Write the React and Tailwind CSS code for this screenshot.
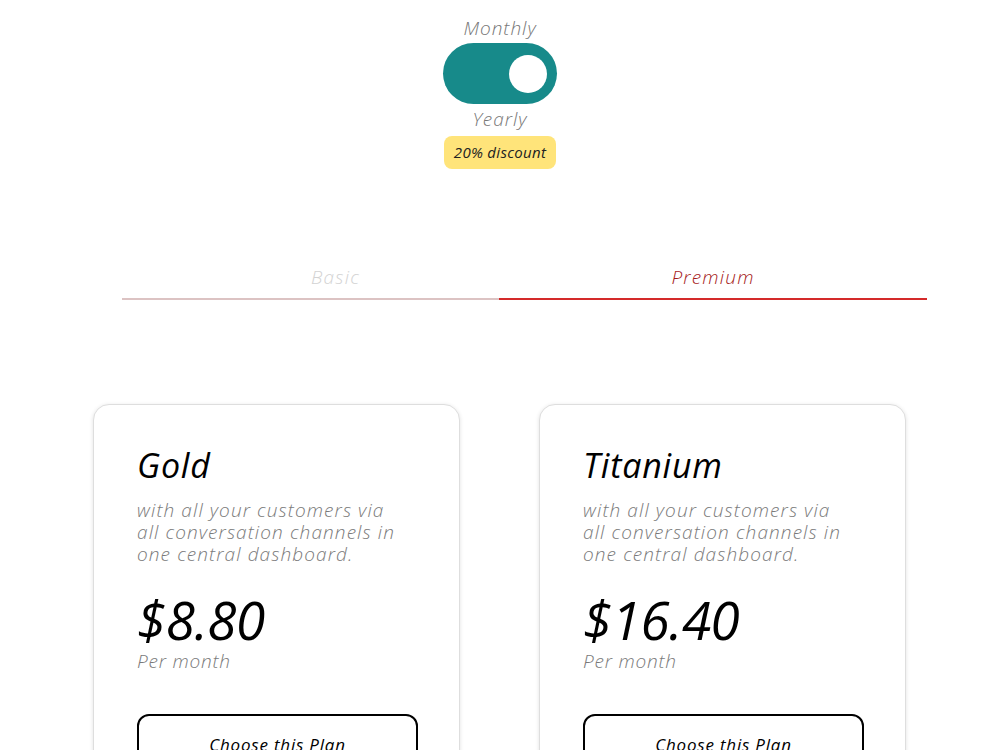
import { useState } from "react";

const plans = [
  { name: "Gold", price: "$8.80" },
  { name: "Titanium", price: "$16.40" },
];

function PlanCard({ plan }) {
  return (
    <div className="w-[367px] rounded-2xl border border-[#dedede] bg-white px-[43px] pt-[38px] pb-10 shadow-[0_1px_4px_rgba(0,0,0,0.12)]">
      <h2 className="text-[34px] leading-[44px] font-normal italic text-black tracking-[0.8px]">{plan.name}</h2>
      <p className="mt-[12px] max-w-[272px] text-[19px] leading-[22px] font-light italic text-[#7a7a7a] tracking-[1.1px]">
        with all your customers via all conversation channels in one central dashboard.
      </p>
      <div className="mt-[29px] text-[53px] leading-[52px] font-normal italic text-black tracking-[-0.5px]">{plan.price}</div>
      <div className="mt-[3px] text-[19px] leading-[24px] font-light italic text-[#7a7a7a] tracking-[0.8px]">Per month</div>
      <button className="mt-[41px] w-[281px] h-[60px] rounded-xl border-2 border-black pt-[2px] text-[17px] italic text-black tracking-[0.8px]">
        Choose this Plan
      </button>
    </div>
  );
}

export default function App() {
  const [yearly, setYearly] = useState(true);
  const [tab, setTab] = useState("premium");

  return (
    <div
      className="h-[750px] w-full overflow-hidden bg-white"
      style={{ fontFamily: "'Open Sans', 'Noto Sans', sans-serif" }}
    >
      <div className="flex flex-col items-center pt-[14px]">
        <span className="text-[19px] leading-[28px] font-light italic text-[#777] tracking-[1px]">Monthly</span>
        <button
          onClick={() => setYearly(!yearly)}
          className={`mt-[1px] flex h-[61px] w-[114px] items-center rounded-full bg-[#178a8a] px-[10px] ${
            yearly ? "justify-end" : "justify-start"
          }`}
        >
          <span className="block h-[38px] w-[38px] rounded-full bg-white" />
        </button>
        <span className="mt-[1px] text-[19px] leading-[28px] font-light italic text-[#777] tracking-[1px]">Yearly</span>
        <span className="mt-[3px] flex h-[33px] w-[112px] items-center justify-center rounded-lg bg-[#ffe47a] text-[15px] italic text-[#222] tracking-[0.3px]">
          20% discount
        </span>
      </div>

      <div className="mt-[95px] ml-[122px] flex w-[805px]">
        <button
          onClick={() => setTab("basic")}
          className={`w-[377px] pl-[50px] pb-[8px] text-[19px] leading-[26px] font-light italic tracking-[1.2px] border-b-2 ${
            tab === "basic" ? "text-[#a61b1b] border-[#d42a2a]" : "text-[#d3d3d3] border-[#dcc3c3]"
          }`}
        >
          Basic
        </button>
        <button
          onClick={() => setTab("premium")}
          className={`w-[428px] pb-[8px] text-[19px] leading-[26px] font-light italic tracking-[1.2px] border-b-2 ${
            tab === "premium" ? "text-[#a61b1b] border-[#d42a2a]" : "text-[#d3d3d3] border-[#dcc3c3]"
          }`}
        >
          Premium
        </button>
      </div>

      <div className="mt-[104px] flex justify-center gap-[79px] pr-[1px]">
        {plans.map((p) => (
          <PlanCard key={p.name} plan={p} />
        ))}
      </div>
    </div>
  );
}
